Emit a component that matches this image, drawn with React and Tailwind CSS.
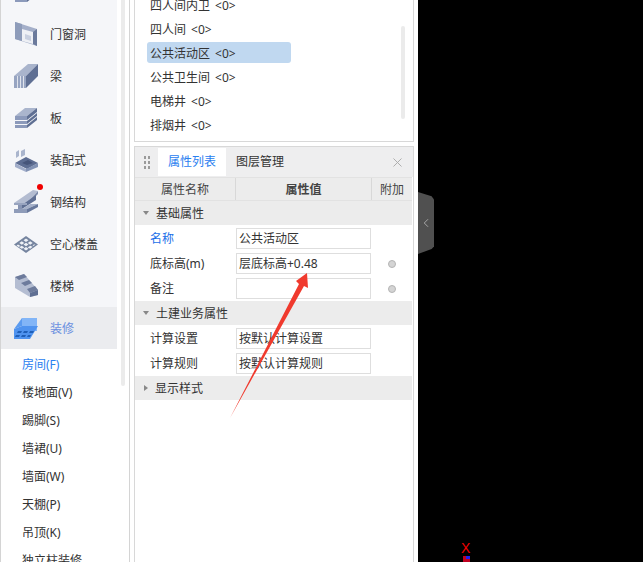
import { X, ChevronLeft } from 'lucide-react';

const Door = () => (
  <svg width="23" height="24" viewBox="0 0 23 24">
    <path d="M0 0l22 7v17L0 17z" fill="#a4afc9" />
    <path d="M7 7l11 3v12L7 19z" fill="#eef0f5" />
    <path d="M10 12l6 2v5l-6-2z" fill="#c9d0e0" />
    <path d="M18 10l4-3v17l-4-2z" fill="#6b7a9c" />
    <path d="M0 0l7 2v17l-7-2z" fill="#8e9cba" />
  </svg>
);
const Beam = () => (
  <svg width="24" height="24" viewBox="0 0 24 24">
    <path d="M0 12L14 0h10L12 12z" fill="#a9b4cc" />
    <path d="M12 12L24 0v12L12 24z" fill="#5f6f93" />
    <path d="M0 12h12v12H0z" fill="#97a4c1" />
    <path d="M3 12h1v12H3zM6 12h1v12H6zM9 12h1v12H9z" fill="#dfe3ec" />
  </svg>
);
const Slab = () => (
  <svg width="24" height="22" viewBox="0 0 24 22">
    <path d="M1 9L11 1h12L13 9z" fill="#aab5cd" />
    <path d="M1 9h12v4H1zM1 14h12v3H1zM1 18h12v3H1z" fill="#8c9abb" />
    <path d="M13 9L23 1v4L13 13zM13 14l10-8v3l-10 8zM13 18l10-8v3l-10 8z" fill="#5f6f93" />
  </svg>
);
const Prefab = () => (
  <svg width="24" height="24" viewBox="0 0 24 24">
    <path d="M2 4l3-2v6L2 10zM7 3l4-2v6L7 9z" fill="#aab5cd" />
    <path d="M1 15l11-6 12 6-11 6z" fill="#5d6d92" />
    <path d="M1 15l11 6v3L1 19z" fill="#a2aeca" />
    <path d="M12 21l12-6v4l-12 5z" fill="#8292b4" />
    <path d="M8 15l6-3 5 3-6 2z" fill="#46557a" />
  </svg>
);
const Steel = () => (
  <svg width="24" height="24" viewBox="0 0 24 24">
    <path d="M0 13L19 0l5 1-11 12z" fill="#b3bcd1" />
    <path d="M13 13L24 1v3L13 15z" fill="#7e8cab" />
    <path d="M8 15L22 5v5L8 19z" fill="#5f6f93" />
    <path d="M0 13h13v2H0z" fill="#98a4bf" />
    <path d="M4 15h4v4H4z" fill="#8794b3" />
    <path d="M8 19l8-5 8 0-11 5z" fill="#a6b1c9" />
    <path d="M0 19h13v4H0z" fill="#8f9cb9" />
    <path d="M13 19l11-5v3l-11 6z" fill="#67779b" />
  </svg>
);
const Hollow = () => (
  <svg width="24" height="17" viewBox="0 0 24 17">
    <path d="M0 8.500L12 0l12 8.500L12 17z" fill="#75849f" />
    <path d="M12 2.500l2.500 1.800L12 6 9.500 4.300zM16.200 5.300l2.500 1.800-2.500 1.700-2.500-1.700zM20 8.500l1.500 0-2 1.500-1-.8zM7.800 5.300l2.500 1.800-2.500 1.700-2.500-1.700zM12 6.800l2.500 1.700L12 10.300 9.500 8.500zM16.200 9.700l2.500 1-2.500 2-2.500-1.300zM4 8.500l2.500 1.600L4.500 11 2.500 9.600zM7.800 9.700l2.500 1.700-2.500 1.300-2.500-1.500zM12 11l2.500 1.700L12 14.500l-2.500-1.800z" fill="#eef1f6" />
  </svg>
);
const Stair = () => (
  <svg width="24" height="24" viewBox="0 0 24 24">
    <path d="M1 3v11l15 9 8-2v-5L10 0z" fill="#b4bdd2" />
    <path d="M1 3l9-3 3 3-8 3zM7 9l8-3 3 3-7 3zM13 15l8-3 3 4-8 3z" fill="#6d7b9c" />
    <path d="M16 19l8-3v5l-8 2z" fill="#5f6f93" />
  </svg>
);
const Finish = () => (
  <svg width="24" height="21" viewBox="0 0 24 21">
    <path d="M8 0h15v13H8z" fill="#82b5f7" />
    <path d="M8 0v8L0 11z" fill="#5b9bf0" />
    <path d="M0 11l8-3h16l-8 13H0z" fill="#4f93ef" />
    <path d="M4 13h4l-1 2H3zM10 13h4l-1 2H9zM16 13h4l-1 2h-4zM2 17h4l-1 2H1zM8 17h4l-1 2H7zM14 17h3l-1 2h-3z" fill="#1f5fb8" />
  </svg>
);

const mainItems = [
  { label: '', icon: <Slab /> },
  { label: '门窗洞', icon: <Door /> },
  { label: '梁', icon: <Beam /> },
  { label: '板', icon: <Slab /> },
  { label: '装配式', icon: <Prefab /> },
  { label: '钢结构', icon: <Steel />, dot: true },
  { label: '空心楼盖', icon: <Hollow /> },
  { label: '楼梯', icon: <Stair /> },
  { label: '装修', icon: <Finish />, active: true },
];

const subItems = ['房间(F)', '楼地面(V)', '踢脚(S)', '墙裙(U)', '墙面(W)', '天棚(P)', '吊顶(K)', '独立柱装修'];

const rooms = [
  { name: '四人间内卫' },
  { name: '四人间' },
  { name: '公共活动区', selected: true },
  { name: '公共卫生间' },
  { name: '电梯井' },
  { name: '排烟井' },
];

function Section({ title, open }) {
  return (
    <div className="flex h-[24px] items-center bg-[#ececec] mr-[1px] text-[#333]">
      <span
        className={
          open
            ? 'ml-[8px] mr-[7px] w-0 h-0 border-x-[3px] border-x-transparent border-t-[4px] border-t-[#888]'
            : 'ml-[9px] mr-[7px] w-0 h-0 border-y-[3px] border-y-transparent border-l-[4px] border-l-[#888]'
        }
      />
      <span className="pt-[2px]">{title}</span>
    </div>
  );
}

function Row({ label, value, blue, dot }) {
  return (
    <div className="flex h-[25px] items-center pt-[3px] pb-[1px]">
      <div className={`w-[101px] pl-[15px] ${blue ? 'text-[#1a6fe8]' : 'text-[#333]'}`}>{label}</div>
      <div className="w-[135px] h-[21px] border border-[#dedede] bg-white pl-[2px] leading-[19px] text-[#333]">{value}</div>
      {dot && <span className="ml-[17px] w-[8px] h-[8px] rounded-full bg-[#d4d4d4] border border-[#b4b4b4]" />}
    </div>
  );
}

export default function App() {
  return (
    <div
      className="relative flex h-[562px] w-[643px] overflow-hidden bg-white text-[12px] text-[#333]"
      style={{ fontFamily: '"Noto Sans", "Noto Sans CJK SC", sans-serif' }}
    >
      {/* left nav */}
      <div className="flex w-[130px] shrink-0 border-x border-[#d4d4d4] overflow-hidden">
        <div className="w-[116px] shrink-0 -mt-[29px]">
          {mainItems.map((item, i) => (
            <div
              key={i}
              className={`relative flex h-[42px] items-center ${item.active ? 'bg-[#ebecef]' : 'bg-[#f5f6f9]'}`}
            >
              <div className="flex w-[49px] shrink-0 justify-center pl-[1px]">{item.icon}</div>
              <span className={`pt-[2px] ${item.active ? 'text-[#6a8fe0]' : 'text-[#333]'}`}>{item.label}</span>
              {item.dot && <span className="absolute left-[36px] top-[3px] w-[6px] h-[6px] rounded-full bg-[#f00000]" />}
            </div>
          ))}
          <div className="pt-[2px]">
            {subItems.map((s, i) => (
              <div key={s} className={`flex h-[28px] items-center pl-[21px] ${i === 0 ? 'text-[#2a80f0]' : 'text-[#333]'}`}>
                {s}
              </div>
            ))}
          </div>
        </div>
        <div className="ml-[4px] w-[4px] h-[386px] rounded-b-full bg-[#ebebeb]" />
      </div>

      {/* middle panels */}
      <div className="ml-[4px] flex w-[280px] shrink-0 flex-col">
        <div className="relative h-[142px] shrink-0 overflow-hidden border-x border-b border-[#d8d8d8]">
          <div className="-mt-[8px] pl-[12px]">
            {rooms.map((r) => (
              <div key={r.name} className="flex h-[24px] items-center">
                <div className={`flex h-[21px] items-center pl-[3px] pt-[3px] ${r.selected ? 'w-[144px] rounded-[3px] bg-[#c0d8f0]' : ''}`}>
                  <span>{r.name}</span>
                  <span className="ml-[5px]">&lt;0&gt;</span>
                </div>
              </div>
            ))}
          </div>
          <div className="absolute left-[266px] top-[26px] w-[4px] h-[93px] rounded-full bg-[#ebebeb]" />
        </div>

        <div className="mt-[4px] flex-1 border-x border-t border-[#d8d8d8]">
          <div className="flex h-[30px] items-stretch bg-[#eeeeef] pt-[1px]">
            <div className="flex w-[23px] items-center justify-center">
              <div className="grid grid-cols-2 gap-x-[2px] gap-y-[2px]">
                {[0, 1, 2, 3, 4, 5].map((d) => (
                  <span key={d} className="w-[2px] h-[3px] bg-[#9a9a9a]" />
                ))}
              </div>
            </div>
            <div className="flex w-[68px] h-[28px] items-center justify-center bg-white text-[#2a80f0]">属性列表</div>
            <div className="flex w-[68px] h-[28px] items-center justify-center text-[#333]">图层管理</div>
            <div className="flex flex-1 items-center justify-end pr-[8px]">
              <X size={15} strokeWidth={1.5} className="text-[#aaa]" />
            </div>
          </div>
          <div className="flex h-[24px] items-center border-y border-[#e2e2e2] bg-[#ececec] text-[#444] mr-[1px]">
            <div className="w-[101px] h-full flex items-center justify-center border-r border-[#d8d8d8] pt-[2px]">属性名称</div>
            <div className="w-[136px] h-full flex items-center justify-center border-r border-[#d8d8d8] font-bold pt-[2px]">属性值</div>
            <div className="flex-1 text-center pt-[1px]">附加</div>
          </div>
          <Section title="基础属性" open />
          <Row label="名称" value="公共活动区" blue />
          <Row label="底标高(m)" value="层底标高+0.48" dot />
          <Row label="备注" value="" dot />
          <div className="h-[1px]" />
          <Section title="土建业务属性" open />
          <Row label="计算设置" value="按默认计算设置" />
          <Row label="计算规则" value="按默认计算规则" />
          <div className="h-[1px]" />
          <Section title="显示样式" />
        </div>
      </div>

      <div className="ml-[4px] flex-1 bg-black" />

      {/* collapse handle */}
      <div
        className="absolute left-[418px] top-[192px] flex h-[62px] w-[16px] items-center justify-center bg-[#505050]"
        style={{ clipPath: 'polygon(0 0, 85% 7%, 100% 12%, 100% 88%, 85% 92%, 0 100%)' }}
      >
        <ChevronLeft size={14} strokeWidth={1.5} className="text-[#b0b0b0]" />
      </div>

      {/* annotation arrow */}
      <svg className="absolute left-0 top-0 pointer-events-none" width="643" height="562">
        <path d="M230 418L299 284 296 281 307 273 308 288 304 286z" fill="#f03a2e" />
      </svg>

      {/* axis marker */}
      <div className="absolute left-[461px] top-[541px] text-[14px] leading-[14px] text-[#f00000]" style={{ fontFamily: '"Liberation Sans", sans-serif' }}>
        X
      </div>
      <div className="absolute left-[463px] top-[556px] w-[7px] h-[6px] bg-[#c00020]" />
      <div className="absolute left-[466px] top-[556px] w-[4px] h-[3px] bg-[#2020f0]" />
    </div>
  );
}
